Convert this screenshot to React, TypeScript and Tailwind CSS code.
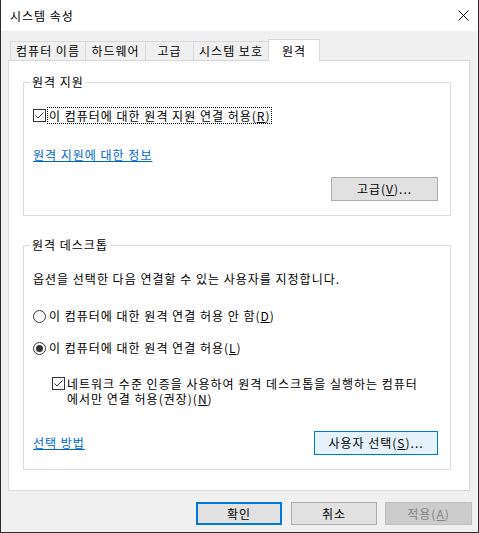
import React from 'react';

const CheckBox: React.FC = () => (
  <svg width="13" height="13" viewBox="0 0 13 13" className="shrink-0">
    <rect x="0.5" y="0.5" width="12" height="12" fill="#fff" stroke="#333" />
    <path d="M2.5 6.5 L5 9 L10.5 3.5" fill="none" stroke="#333" strokeWidth="1" />
  </svg>
);

const Radio: React.FC<{ checked?: boolean }> = ({ checked }) => (
  <svg width="13" height="13" viewBox="0 0 13 13" className="shrink-0">
    <circle cx="6.5" cy="6.5" r="6" fill="#fff" stroke="#333" />
    {checked && <circle cx="6.5" cy="6.5" r="3.5" fill="#333" />}
  </svg>
);

const Key: React.FC<{ k: string }> = ({ k }) => (
  <>
    (<span className="underline">{k}</span>)
  </>
);

const tabs = [
  { label: '컴퓨터 이름', w: 'w-[76px]' },
  { label: '하드웨어', w: 'w-[61px]' },
  { label: '고급', w: 'w-[49px]' },
  { label: '시스템 보호', w: 'w-[76px]' },
];

const App: React.FC = () => {
  return (
    <div className="w-[479px] h-[533px] flex flex-col bg-[#f0f0f0] border-x border-b border-[#2b2b2b] text-[12px] tracking-[1px] text-black font-['Noto_Sans_CJK_KR',sans-serif] leading-[16px]">
      {/* title bar */}
      <div className="h-[31px] shrink-0 bg-white flex items-center justify-between pl-[9px] pr-[9px]">
        <span>시스템 속성</span>
        <svg width="11" height="11" viewBox="0 0 11 11">
          <path d="M0.5 0.5 L10.5 10.5 M10.5 0.5 L0.5 10.5" stroke="#000" strokeWidth="1" />
        </svg>
      </div>

      {/* tabs */}
      <div className="mt-[8px] ml-[9px] flex h-[21px]">
        {tabs.map((t, i) => (
          <div
            key={t.label}
            className={`${t.w} ${i > 0 ? '-ml-px' : ''} mt-[2px] h-[19px] border border-b-0 border-[#d9d9d9] bg-[#f0f0f0] flex items-center justify-center`}
          >
            {t.label}
          </div>
        ))}
        <div className="-ml-px w-[52px] h-[22px] relative z-10 border border-b-0 border-[#d9d9d9] bg-white flex items-center justify-center">
          원격
        </div>
      </div>

      {/* panel */}
      <div className="ml-[7px] w-[462px] h-[431px] bg-white border border-[#d9d9d9] px-[14px] flex flex-col">
        <div className="relative mt-[21px] w-[428px] h-[134px] shrink-0 border border-[#dcdcdc] pl-[9px] pr-[12px] flex flex-col">
          <span className="absolute left-[6px] -top-[9px] bg-white px-[2px]">원격 지원</span>
          <div className="mt-[24px] h-[17px] flex items-center">
            <CheckBox />
            <span className="ml-[1px] border border-dotted border-black px-[1px] leading-[15px]">
              이 컴퓨터에 대한 원격 지원 연결 허용<Key k="R" />
            </span>
          </div>
          <a className="mt-[23px] self-start text-[#0066cc] underline">원격 지원에 대한 정보</a>
          <button className="mt-[14px] self-end w-[107px] h-[24px] border border-[#adadad] bg-[#e1e1e1]">
            고급<Key k="V" />...
          </button>
        </div>

        <div className="relative mt-[29px] w-[428px] h-[225px] shrink-0 border border-[#dcdcdc] pl-[9px] pr-[12px] flex flex-col">
          <span className="absolute left-[6px] -top-[9px] bg-white px-[2px]">원격 데스크톱</span>
          <p className="mt-[25px]">옵션을 선택한 다음 연결할 수 있는 사용자를 지정합니다.</p>
          <div className="mt-[21px] h-[16px] flex items-center gap-[3px]">
            <Radio />
            <span>
              이 컴퓨터에 대한 원격 연결 허용 안 함<Key k="D" />
            </span>
          </div>
          <div className="mt-[16px] h-[16px] flex items-center gap-[3px]">
            <Radio checked />
            <span>
              이 컴퓨터에 대한 원격 연결 허용<Key k="L" />
            </span>
          </div>
          <div className="mt-[20px] pl-[19px] flex items-start gap-[2px]">
            <div className="mt-[1px]">
              <CheckBox />
            </div>
            <div className="leading-[15px]">
              <div>네트워크 수준 인증을 사용하여 원격 데스크톱을 실행하는 컴퓨터</div>
              <div>
                에서만 연결 허용(권장)<Key k="N" />
              </div>
            </div>
          </div>
          <div className="mt-[25px] h-[24px] flex items-center justify-between">
            <a className="text-[#0066cc] underline">선택 방법</a>
            <button className="w-[124px] h-[24px] border border-[#0078d7] bg-[#e5f1fb]">
              사용자 선택<Key k="S" />...
            </button>
          </div>
        </div>
      </div>

      {/* dialog buttons */}
      <div className="mt-[11px] pr-[6px] flex justify-end">
        <button className="w-[86px] h-[23px] mr-[9px] border-2 border-[#0078d7] bg-[#e1e1e1]">확인</button>
        <button className="w-[86px] h-[23px] mr-[8px] border border-[#adadad] bg-[#e1e1e1]">취소</button>
        <button className="w-[87px] h-[23px] border border-[#bfbfbf] bg-[#cccccc] text-[#838383]">
          적용<Key k="A" />
        </button>
      </div>
    </div>
  );
};

export default App;
